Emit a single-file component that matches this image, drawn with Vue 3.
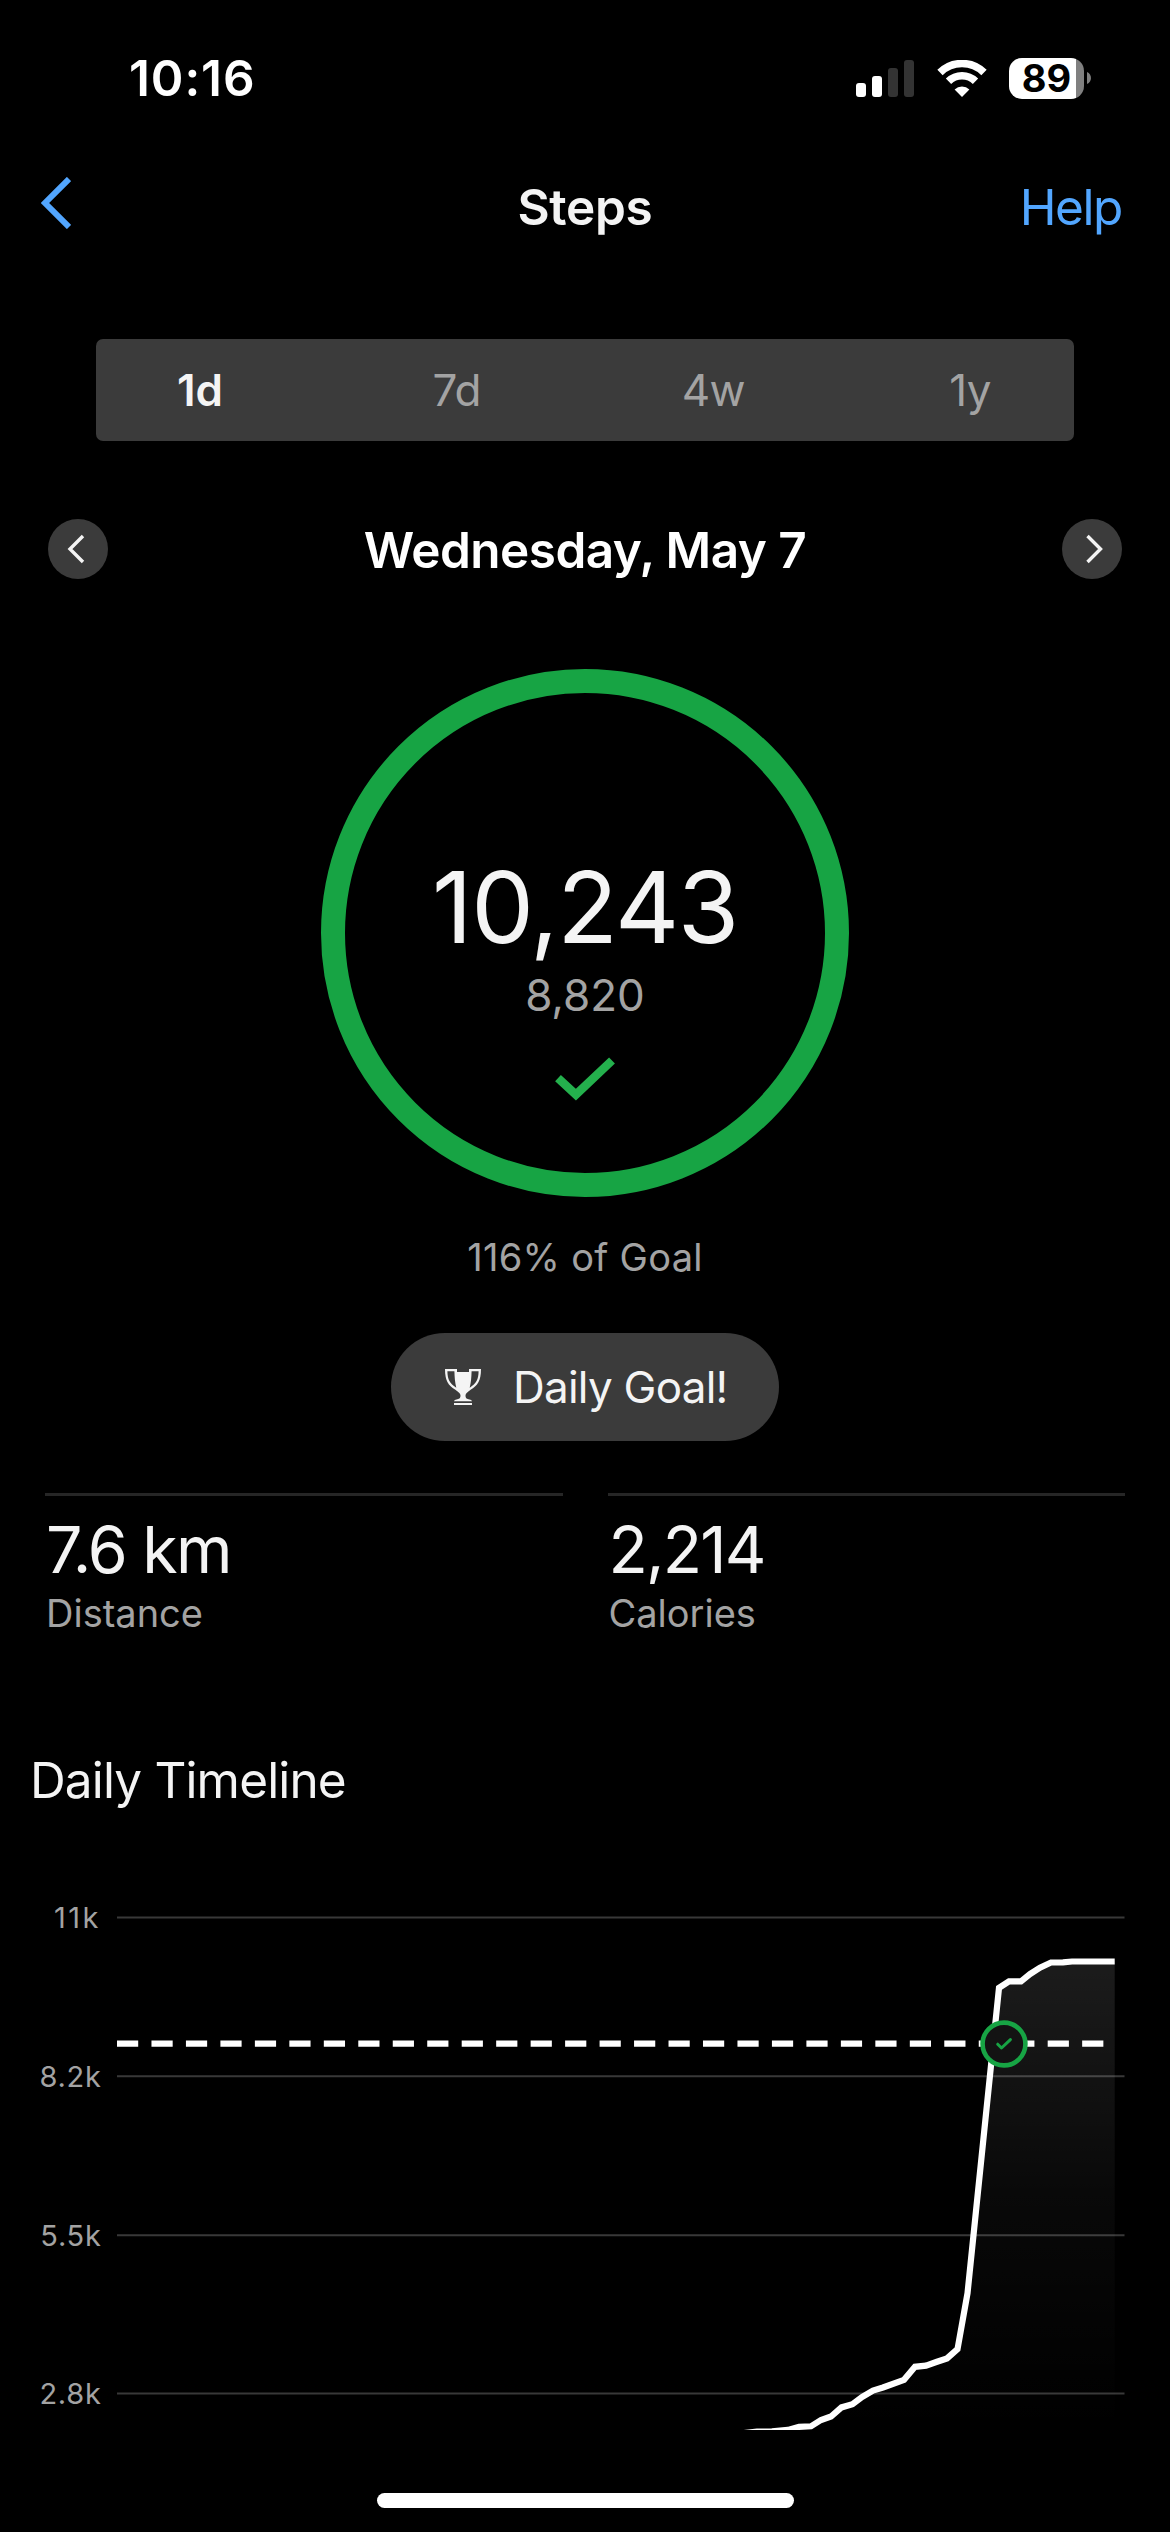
<template>
  <div class="screen">
    <div class="status">
      <span class="clock">10:16</span>
      <div class="statusIcons">
        <svg class="signal" viewBox="0 0 58 37">
          <rect x="0" y="23" width="10" height="14" rx="3" fill="#fff" />
          <rect x="16" y="16" width="10" height="21" rx="3" fill="#fff" />
          <rect x="32" y="8" width="10" height="29" rx="3" fill="#333" />
          <rect x="48" y="0" width="10" height="37" rx="3" fill="#333" />
        </svg>
        <svg class="wifi" viewBox="0 0 50 37">
          <path d="M3 12.5 A31.5 31.5 0 0 1 47 12.5" />
          <path d="M11.5 21.2 A19.3 19.3 0 0 1 38.5 21.2" />
          <path class="dot" d="M25 37 L17.6 29.4 A10.6 10.6 0 0 1 32.4 29.4 Z" />
        </svg>
        <div class="battery"><span>89</span></div>
        <svg class="batteryCap" viewBox="0 0 4 12"><path d="M0 0 C5.3 2 5.3 10 0 12 Z" fill="#808080" /></svg>
      </div>
    </div>

    <div class="nav">
      <svg class="back" viewBox="0 0 30 52"><path d="M28 2 L4 26 L28 50" /></svg>
      <span class="title">Steps</span>
      <span class="help">Help</span>
    </div>

    <div class="tabs">
      <span v-for="tab in tabs" :key="tab" :class="tab === activeTab ? 'tab active' : 'tab'" @click="activeTab = tab">{{ tab }}</span>
    </div>

    <div class="dateRow">
      <div class="arrow">
        <svg viewBox="0 0 60 60"><path d="M35 17 L22 30 L35 43" /></svg>
      </div>
      <span class="date">Wednesday, May 7</span>
      <div class="arrow">
        <svg viewBox="0 0 60 60"><path d="M25.5 17 L38.5 30 L25.5 43" /></svg>
      </div>
    </div>

    <div class="ring">
      <span class="steps">10,243</span>
      <span class="goal">8,820</span>
      <svg class="check" viewBox="0 0 60 44"><path d="M3 21.2 L20.9 37.7 L57 3.5" /></svg>
    </div>
    <p class="percent">116% of Goal</p>

    <div class="badge">
      <svg class="trophy" viewBox="0 0 36 36">
        <path fill-rule="evenodd" d="M0 0 H12 V3 H24 V0 H36 C36 12 32.5 16.5 26 20.5 C22.5 23 20.5 24.5 20.5 26.5 C20.5 29.5 22 30 24.5 30.4 C26 30.8 27 31.3 27 32.3 H9 C9 31.3 10 30.8 11.5 30.4 C14 30 15.5 29.5 15.5 26.5 C15.5 24.5 13.5 23 10 20.5 C3.5 16.5 0 12 0 0 Z M2.4 2.2 C2.6 10.5 4.6 14.2 11.3 18.7 C10 13.5 9.6 8.5 9.4 2.2 Z M33.6 2.2 H26.6 C26.4 8.5 26 13.5 24.7 18.7 C31.4 14.2 33.4 10.5 33.6 2.2 Z" />
        <rect x="9" y="34" width="18" height="2" />
      </svg>
      <span>Daily Goal!</span>
    </div>

    <div class="stats">
      <div v-for="item in stats" :key="item.label" class="stat">
        <span class="value">{{ item.value }}</span>
        <span class="label">{{ item.label }}</span>
      </div>
    </div>

    <h2>Daily Timeline</h2>
    <svg class="chart" viewBox="0 0 1170 550">
      <defs>
        <linearGradient id="area" x1="0" y1="80" x2="0" y2="550" gradientUnits="userSpaceOnUse">
          <stop offset="0" stop-color="#fff" stop-opacity="0.11" />
          <stop offset="0.5" stop-color="#fff" stop-opacity="0.035" />
          <stop offset="1" stop-color="#fff" stop-opacity="0" />
        </linearGradient>
      </defs>
      <g v-for="tick in ticks" :key="tick.text">
        <text :class="tick.wide ? 'tick wide' : 'tick'" :x="tick.x" :y="tick.y + 10.3">{{ tick.text }}</text>
        <line class="grid" x1="117" x2="1124.5" :y1="tick.y" :y2="tick.y" />
      </g>
      <line class="goalLine" x1="117" x2="1104" y1="163.6" y2="163.6" />
      <polygon :points="areaPoints" fill="url(#area)" />
      <polyline class="line" :points="linePoints" />
      <circle class="marker" cx="1004" cy="164" r="21.4" />
      <path class="markerCheck" d="M997.7 164.2 L1001.5 168 L1010.4 159.6" />
    </svg>
    <div class="homeBar"></div>
  </div>
</template>

<script setup>
import { ref, computed } from "vue";

const tabs = ["1d", "7d", "4w", "1y"];
const activeTab = ref("1d");

const stats = [
  { value: "7.6 km", label: "Distance" },
  { value: "2,214", label: "Calories" },
];

const ticks = [
  { text: "11k", x: 101, y: 37.4, wide: true },
  { text: "8.2k", x: 101.5, y: 196.2 },
  { text: "5.5k", x: 101.5, y: 355.2 },
  { text: "2.8k", x: 101.5, y: 513.5 },
];

// chart points, x / y inside the svg
const points = [
  [744, 553], [757, 551.7], [772, 551.4], [788, 549.9], [799, 546.8], [811, 546.3],
  [821, 540], [831, 536.5], [841.5, 527.4], [852.5, 524.3], [862, 517],
  [873, 510.5], [883, 507.5], [904, 499.8], [915, 486.8], [926, 485.6],
  [937, 481.8], [947, 478.4], [957.5, 469.2], [967.5, 413.3], [999, 107.9],
  [1009, 101.4], [1021, 101.4], [1030, 94.1], [1040, 87.6], [1051, 82.5],
  [1063, 82.4], [1072, 81.5], [1114.7, 81.5],
];
const linePoints = computed(() => points.map((p) => p.join(",")).join(" "));
const areaPoints = computed(() => linePoints.value + " 1114.7,560 744,560");
</script>

<style>
body {
  margin: 0;
  background: #000;
}
</style>

<style scoped>
.screen {
  width: 1170px;
  height: 2532px;
  overflow: hidden;
  background: #000;
  color: #f4f4f4;
  font-family: Inter, "Liberation Sans", sans-serif;
  display: flex;
  flex-direction: column;
  align-items: center;
  white-space: nowrap;
}
.screen > * {
  flex-shrink: 0;
}
.status {
  width: 100%;
  height: 156px;
  box-sizing: border-box;
  padding: 0 79px 0 129px;
  display: flex;
  align-items: center;
  justify-content: space-between;
}
.clock {
  color: #fff;
  font-size: 49.5px;
  font-weight: 600;
  letter-spacing: 0.9px;
}
.statusIcons {
  display: flex;
  align-items: center;
}
.signal {
  width: 58px;
  height: 37px;
}
.wifi {
  width: 50px;
  height: 37px;
  margin: 0 22px 0 23px;
}
.wifi path {
  fill: none;
  stroke: #fff;
  stroke-width: 7.6;
}
.wifi .dot {
  fill: #fff;
  stroke: none;
}
.battery {
  width: 75px;
  height: 41px;
  border-radius: 13px;
  background: linear-gradient(90deg, #fff 67px, #808080 67px);
  display: flex;
  align-items: center;
  justify-content: center;
}
.battery span {
  color: #000;
  font-size: 38px;
  font-weight: 700;
}
.batteryCap {
  width: 4px;
  height: 12px;
  margin-left: 3px;
}
.nav {
  width: 100%;
  height: 102px;
  box-sizing: border-box;
  padding: 0 48px;
  display: grid;
  grid-template-columns: 1fr auto 1fr;
  align-items: center;
}
.back {
  width: 30px;
  height: 52px;
  margin: 0 0 8px -7px;
}
.back path {
  fill: none;
  stroke: #52a6ff;
  stroke-width: 6;
}
.title {
  font-size: 49.5px;
  font-weight: 600;
  letter-spacing: -0.3px;
}
.help {
  justify-self: end;
  color: #52a6ff;
  font-size: 49.5px;
  letter-spacing: -1.4px;
}
.tabs {
  width: 978px;
  height: 102px;
  margin-top: 81px;
  box-sizing: border-box;
  padding: 0 64px;
  border-radius: 7px;
  background: #3b3b3b;
  display: flex;
  align-items: center;
  justify-content: space-between;
}
.tab {
  width: 80px;
  text-align: center;
  color: #a3a3a3;
  font-size: 44px;
  letter-spacing: -0.7px;
}
.tab.active {
  color: #f4f4f4;
  font-weight: 600;
  letter-spacing: 0;
}
.dateRow {
  width: 1074px;
  height: 60px;
  margin-top: 78px;
  display: flex;
  align-items: center;
  justify-content: space-between;
}
.arrow {
  width: 60px;
  height: 60px;
  border-radius: 50%;
  background: #3b3b3b;
}
.arrow svg {
  display: block;
}
.arrow path {
  fill: none;
  stroke: #f4f4f4;
  stroke-width: 3.4;
}
.date {
  padding-top: 2px;
  color: #fff;
  font-size: 49.5px;
  font-weight: 600;
  letter-spacing: -0.55px;
}
.ring {
  width: 528px;
  height: 528px;
  margin-top: 90px;
  box-sizing: border-box;
  border: 24px solid #17a444;
  border-radius: 50%;
  padding-top: 164px;
  display: flex;
  flex-direction: column;
  align-items: center;
}
.steps {
  font-size: 99.5px;
  line-height: 100px;
  letter-spacing: -1.4px;
}
.goal {
  margin-top: 12px;
  color: #a3a3a3;
  font-size: 44px;
  line-height: 52px;
}
.check {
  width: 60px;
  height: 44px;
  margin-top: 36px;
}
.check path {
  fill: none;
  stroke: #24b04d;
  stroke-width: 8.5;
}
.percent {
  margin: 35px 0 0;
  color: #a3a3a3;
  font-size: 38px;
  line-height: 50px;
  letter-spacing: 0.3px;
}
.badge {
  width: 388px;
  height: 108px;
  margin-top: 51px;
  box-sizing: border-box;
  padding-left: 54px;
  border-radius: 54px;
  background: #3b3b3b;
  display: flex;
  align-items: center;
  font-size: 44px;
  letter-spacing: -0.75px;
}
.trophy {
  width: 36px;
  height: 36px;
  margin-right: 32px;
  fill: #f4f4f4;
}
.stats {
  width: 1080px;
  margin-top: 52px;
  display: grid;
  grid-template-columns: 1fr 1fr;
  gap: 45px;
}
.stat {
  border-top: 3px solid #262626;
  padding-top: 22px;
  display: flex;
  flex-direction: column;
}
.value {
  padding-left: 1px;
  font-size: 64.5px;
  line-height: 65px;
  letter-spacing: -1.8px;
}
.label {
  margin-top: 8px;
  padding-left: 1px;
  color: #a3a3a3;
  font-size: 38px;
  line-height: 45px;
}
h2 {
  align-self: flex-start;
  margin: 114px 0 0 30px;
  font-size: 49.5px;
  font-weight: 400;
  line-height: 60px;
  letter-spacing: -0.85px;
}
.chart {
  width: 1170px;
  height: 550px;
  margin-top: 70px;
  overflow: hidden;
}
.tick {
  fill: #a3a3a3;
  font-size: 29px;
  letter-spacing: 0.7px;
  text-anchor: end;
}
.tick.wide {
  letter-spacing: 2.5px;
}
.grid {
  stroke: #383838;
  stroke-width: 2;
}
.goalLine {
  stroke: #fff;
  stroke-width: 6.4;
  stroke-dasharray: 21.2 13.27;
}
.line {
  fill: none;
  stroke: #fff;
  stroke-width: 6.2;
}
.marker {
  fill: #131313;
  stroke: #17a444;
  stroke-width: 4.6;
}
.markerCheck {
  fill: none;
  stroke: #17a444;
  stroke-width: 3;
  stroke-linecap: round;
  stroke-linejoin: round;
}
.homeBar {
  width: 417px;
  height: 15px;
  margin-top: 63px;
  border-radius: 8px;
  background: #fff;
}
</style>
